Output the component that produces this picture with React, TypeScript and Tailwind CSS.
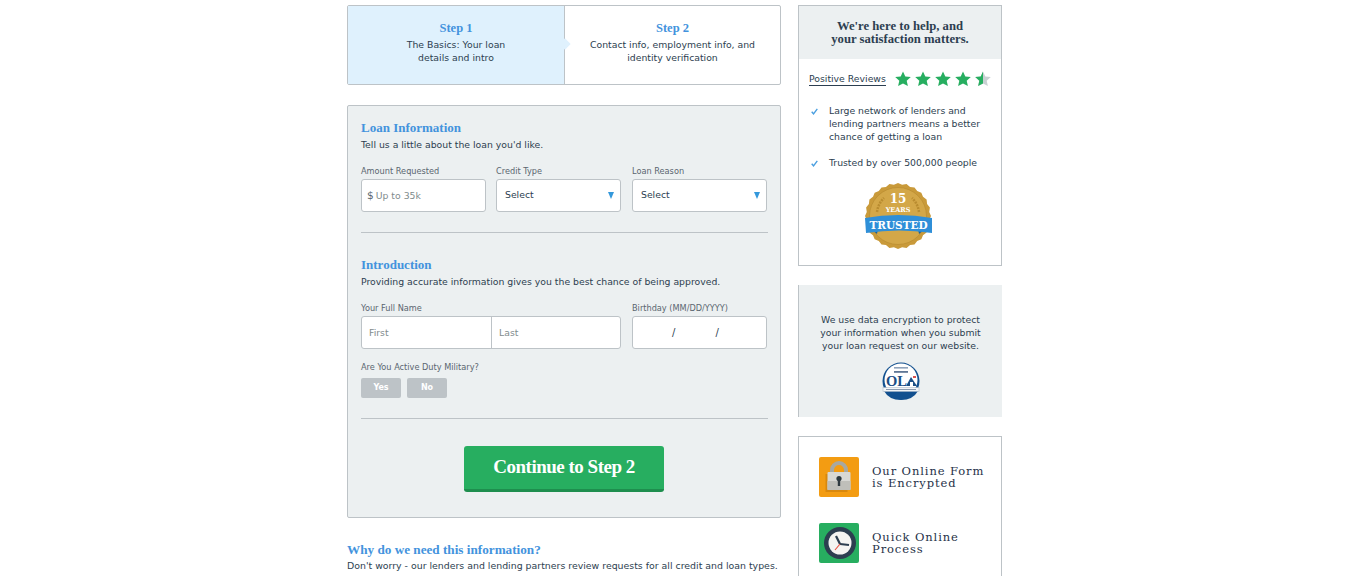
const body = { fontFamily: '"DejaVu Sans", Verdana, sans-serif' };

function Star({ half }: { half?: boolean }) {
  const d = "M8 .4l2.3 5 5.5.6-4.1 3.7 1.2 5.4L8 12.4l-4.9 2.7 1.2-5.4L.2 6l5.5-.6z";
  return (
    <svg viewBox="0 0 16 16" className="w-[16px] h-[16px]">
      <path d={d} fill={half ? "#c9d1d3" : "#27ae60"} />
      {half && <path d="M8 .4v12l-4.9 2.7 1.2-5.4L.2 6l5.5-.6z" fill="#27ae60" />}
    </svg>
  );
}

function Check() {
  return (
    <svg viewBox="0 0 10 10" className="w-[7px] h-[7px] mt-[4px] shrink-0">
      <path d="M1 5.5l2.6 2.8L9 1.2" fill="none" stroke="#4a9fe0" strokeWidth="2" />
    </svg>
  );
}

function Caret() {
  return <span className="w-0 h-0 border-x-[3.5px] border-x-transparent border-t-[7px] border-t-[#3498db] mt-[2px]" />;
}

function Label({ children }: { children: string }) {
  return <div className="text-[8.2px] leading-[11px] text-[#5a6670] mb-[2px]">{children}</div>;
}

function SelectBox() {
  return (
    <div className="h-[33px] bg-white border border-[#bdc3c7] rounded-[3px] pl-[8px] pr-[6px] pb-[2px] flex items-center justify-between text-[9.3px] text-[#2c3e50]">
      Select
      <Caret />
    </div>
  );
}

function Badge() {
  const pts: string[] = [];
  for (let i = 0; i < 48; i++) {
    const r = i % 2 ? 31.5 : 33;
    const a = (i / 48) * Math.PI * 2;
    pts.push(`${33 + r * Math.cos(a)},${33 + r * Math.sin(a)}`);
  }
  return (
    <svg viewBox="0 0 70 68" className="w-[70px] h-[68px]">
      <polygon points={pts.join(" ")} fill="#c99a3a" />
      <circle cx="33" cy="33" r="28.5" fill="#d3a748" stroke="#b98c30" strokeWidth="0.7" />
      <path d="M12 29q1-8 7-14M54 29q-1-8-7-14" fill="none" stroke="#b98c30" strokeWidth="2.5" strokeDasharray="2 1" />
      <text x="33" y="19.5" textAnchor="middle" fontSize="12" fontWeight="700" fill="#fff" fontFamily="DejaVu Serif">15</text>
      <text x="33" y="28.5" textAnchor="middle" fontSize="6.5" fontWeight="700" fill="#fff" fontFamily="DejaVu Serif">YEARS</text>
      <path d="M6 46l6 5 1-5z" fill="#1a5f96" />
      <path d="M60 46l-6 5-1-5z" fill="#1a5f96" />
      <path d="M0 35q33-6 67 0v15q-33-5-66 0z" fill="#2f8fd8" />
      <text x="33.5" y="46" textAnchor="middle" fontSize="10.5" fontWeight="700" fill="#fff" fontFamily="DejaVu Serif">TRUSTED</text>
    </svg>
  );
}

function OlaBadge() {
  return (
    <svg viewBox="0 0 38 38" className="w-[38px] h-[38px]">
      <circle cx="19" cy="19" r="18.5" fill="#12508f" />
      <circle cx="19" cy="18" r="16.5" fill="#fff" />
      <path d="M2 29h34q-5 9-17 9T2 29z" fill="#12508f" />
      <rect x="12" y="5" width="14" height="1.6" fill="#8fa3bb" />
      <rect x="12" y="9" width="14" height="1.8" fill="#5f7796" />
      <text x="4" y="24" fontSize="14.5" fontWeight="700" fill="#1b4f86" fontFamily="Liberation Serif">OL</text>
      <path d="M24 24l5-9 6 9z" fill="#1b4f86" />
      <path d="M28 24v-4h3v4z" fill="#fff" />
      <rect x="31" y="14" width="3" height="2" fill="#d9534f" />
      <rect x="1" y="25.5" width="36" height="4" fill="#f3f5f7" stroke="#9fb0c2" strokeWidth="0.5" />
      <rect x="4" y="27" width="30" height="1" fill="#8a9bb0" />
    </svg>
  );
}

function LockIcon() {
  return (
    <div className="w-[40px] h-[40px] rounded-[2px] bg-[#f39c12]">
      <svg viewBox="0 0 40 40" className="w-[40px] h-[40px]">
        <path d="M11 16v-3a9 9 0 0 1 18 0v3h-4v-3a5 5 0 0 0-10 0v3z" fill="#a8a8a0" />
        <rect x="6.5" y="17" width="22" height="18" fill="#d8880d" />
        <rect x="8.5" y="15" width="23" height="18" rx="1" fill="#d8d8d4" />
        <rect x="8.5" y="24" width="23" height="9" fill="#bfbfba" />
        <circle cx="20" cy="21.5" r="2.6" fill="#2f3a40" />
        <rect x="18.8" y="22" width="2.4" height="7" fill="#2f3a40" />
      </svg>
    </div>
  );
}

function ClockIcon() {
  return (
    <div className="w-[40px] h-[40px] rounded-[2px] bg-[#27ae60]">
      <svg viewBox="0 0 40 40" className="w-[40px] h-[40px]">
        <circle cx="21" cy="20" r="16" fill="#2c3e50" />
        <circle cx="21" cy="20" r="11.5" fill="#f4f4f2" />
        <path d="M21 21l-4-8" stroke="#2c3e50" strokeWidth="2.2" />
        <path d="M21 21l9 1" stroke="#2c3e50" strokeWidth="2.2" />
        <path d="M21 21l-5 6" stroke="#e74c3c" strokeWidth="1.1" />
      </svg>
    </div>
  );
}

export default function App() {
  return (
    <div className="h-[576px] overflow-hidden bg-white" style={body}>
      <div className="w-[655px] ml-[347px] pt-[5px] flex items-start gap-[17px]">
        <div className="w-[434px] shrink-0">
          <div className="h-[80px] flex border border-[#bdc3c7] rounded-[2px]">
            <div className="w-[217px] bg-[#dff1fd] border-r border-[#bdc3c7] text-center pt-[14px] relative">
              <div className="font-['Liberation_Serif'] font-bold text-[12.5px] leading-[16px] text-[#4393dd]">Step 1</div>
              <p className="text-[9.3px] leading-[13px] mt-[2px] text-[#2c3e50]">The Basics: Your loan<br />details and intro</p>
              <span className="absolute right-[-5px] top-[34px] w-[8px] h-[8px] rotate-45 bg-[#dff1fd]" />
            </div>
            <div className="flex-1 text-center pt-[14px]">
              <div className="font-['Liberation_Serif'] font-bold text-[12.5px] leading-[16px] text-[#4393dd]">Step 2</div>
              <p className="text-[9.3px] leading-[13px] mt-[2px] text-[#2c3e50]">Contact info, employment info, and<br />identity verification</p>
            </div>
          </div>

          <div className="mt-[20px] h-[413px] bg-[#ecf0f1] border border-[#bdc3c7] rounded-[2px] pt-[14px] px-[13px]">
            <h2 className="font-['Liberation_Serif'] font-bold text-[13px] leading-[16px] text-[#4393dd]">Loan Information</h2>
            <p className="text-[9.3px] leading-[13px] mt-[2px] text-[#2c3e50]">Tell us a little about the loan you'd like.</p>
            <div className="flex mt-[15px] w-[406px]">
              <div className="w-[125px]">
                <Label>Amount Requested</Label>
                <div className="h-[33px] bg-white border border-[#bdc3c7] rounded-[3px] pl-[5px] flex items-center text-[9.3px] text-[#7f8c8d]">
                  <span className="text-[#5a6670] text-[10.5px] mr-[2px]">$</span>Up to 35k
                </div>
              </div>
              <div className="w-[125px] ml-[10px]">
                <Label>Credit Type</Label>
                <SelectBox />
              </div>
              <div className="w-[135px] ml-[11px]">
                <Label>Loan Reason</Label>
                <SelectBox />
              </div>
            </div>
            <div className="mt-[20px] border-t border-[#bdc3c7] w-[407px]" />

            <h2 className="font-['Liberation_Serif'] font-bold text-[13px] leading-[16px] text-[#4393dd] mt-[24px]">Introduction</h2>
            <p className="text-[9.3px] leading-[13px] mt-[2px] text-[#2c3e50]">Providing accurate information gives you the best chance of being approved.</p>
            <div className="flex mt-[15px] w-[406px]">
              <div className="w-[260px]">
                <Label>Your Full Name</Label>
                <div className="h-[33px] bg-white border border-[#bdc3c7] rounded-[3px] flex text-[9.3px] text-[#7f8c8d]">
                  <div className="w-[130px] border-r border-[#bdc3c7] pl-[7px] flex items-center">First</div>
                  <div className="pl-[7px] flex items-center">Last</div>
                </div>
              </div>
              <div className="w-[135px] ml-[11px]">
                <Label>Birthday (MM/DD/YYYY)</Label>
                <div className="h-[33px] bg-white border border-[#bdc3c7] rounded-[3px] flex items-center text-[10px] text-[#2c3e50] pl-[39px] gap-[40px]">
                  <span>/</span>
                  <span>/</span>
                </div>
              </div>
            </div>
            <div className="mt-[13px]"><Label>Are You Active Duty Military?</Label></div>
            <div className="flex gap-[6px] mt-[5px]">
              <div className="w-[40px] h-[20px] bg-[#bdc3c7] rounded-[2px] text-white font-bold text-[8px] flex items-center justify-center">Yes</div>
              <div className="w-[40px] h-[20px] bg-[#bdc3c7] rounded-[2px] text-white font-bold text-[8px] flex items-center justify-center">No</div>
            </div>
            <div className="mt-[20px] border-t border-[#bdc3c7] w-[407px]" />
            <div className="mt-[27px] flex justify-center">
              <div className="w-[200px] h-[46px] bg-[#27ae60] border-b-[3px] border-[#1e8e4e] rounded-[3px] flex items-center justify-center text-white font-['Liberation_Serif'] font-bold text-[19px] tracking-[-0.5px]">
                Continue to Step 2
              </div>
            </div>
          </div>

          <h3 className="font-['Liberation_Serif'] font-bold text-[13.2px] leading-[16px] text-[#4393dd] mt-[24px]">Why do we need this information?</h3>
          <p className="text-[9.4px] leading-[14px] mt-[1px] text-[#2c3e50] whitespace-nowrap">
            Don't worry - our lenders and lending partners review requests for all credit and loan types.
          </p>
        </div>

        <div className="w-[204px] shrink-0">
          <div className="h-[261px] border border-[#bdc3c7]">
            <div className="h-[53px] bg-[#ecf0f1] text-center pt-[14px] font-['Liberation_Serif'] font-bold text-[12.7px] leading-[13px] text-[#2c3e50]">
              We're here to help, and<br />your satisfaction matters.
            </div>
            <div className="flex items-center pl-[10px] mt-[12px]">
              <span className="text-[9.3px] leading-[12px] text-[#2c3e50] border-b border-[#2c3e50]">Positive Reviews</span>
              <div className="flex gap-[4px] ml-[9px]">
                <Star /><Star /><Star /><Star /><Star half />
              </div>
            </div>
            <ul className="mt-[17px] pl-[12px] pr-[10px] text-[9.3px] leading-[13px] text-[#2c3e50] flex flex-col gap-[13px]">
              <li className="flex gap-[11px]"><Check /><span>Large network of lenders and lending partners means a better chance of getting a loan</span></li>
              <li className="flex gap-[11px]"><Check /><span>Trusted by over 500,000 people</span></li>
            </ul>
            <div className="flex justify-center mt-[14px]"><Badge /></div>
          </div>

          <div className="mt-[19px] h-[132px] bg-[#ecf0f1] border-l border-[#bdc3c7] text-center pt-[28px] text-[9.3px] leading-[13px] text-[#2c3e50]">
            We use data encryption to protect<br />your information when you submit<br />your loan request on our website.
            <div className="flex justify-center mt-[10px]"><OlaBadge /></div>
          </div>

          <div className="mt-[19px] h-[300px] border border-[#bdc3c7] pl-[20px] pt-[20px] flex flex-col gap-[26px] font-['DejaVu_Serif'] text-[11.5px] leading-[12px] tracking-[0.9px] text-[#1f3148]">
            <div className="flex items-center gap-[13px]"><LockIcon /><span>Our Online Form<br />is Encrypted</span></div>
            <div className="flex items-center gap-[13px]"><ClockIcon /><span>Quick Online<br />Process</span></div>
          </div>
        </div>
      </div>
    </div>
  );
}
